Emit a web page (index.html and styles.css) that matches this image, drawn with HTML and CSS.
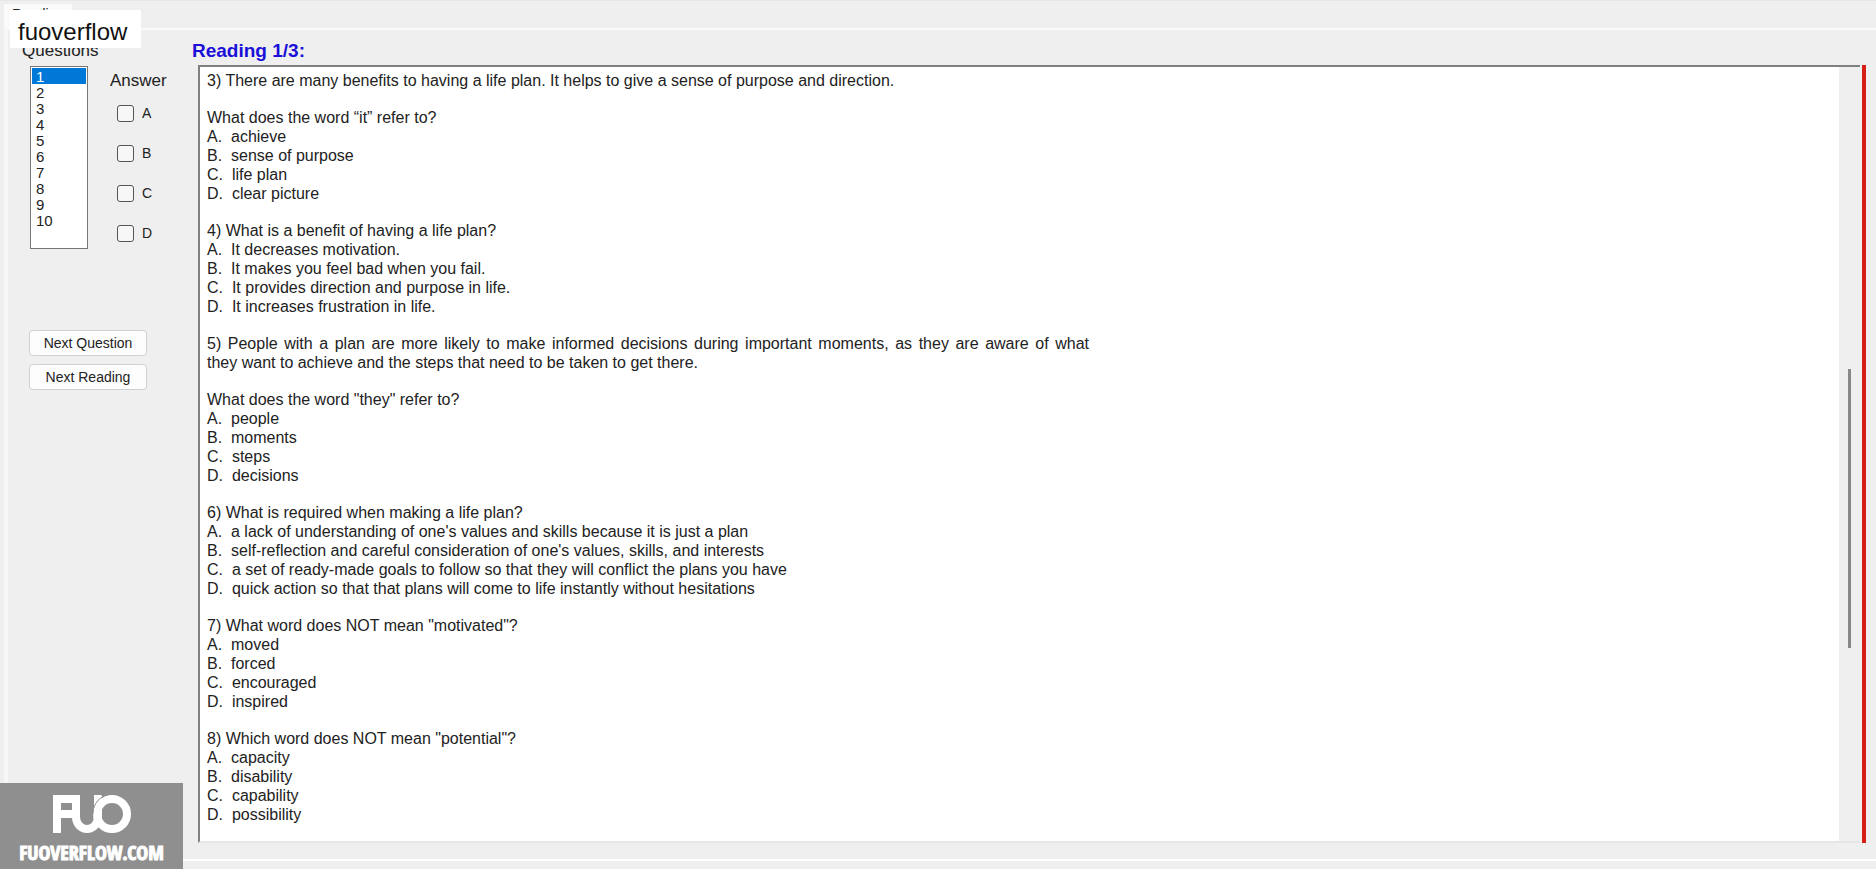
FILE: index.html
```html
<!DOCTYPE html>
<html lang="en">
<head>
<meta charset="utf-8">
<title>Reading</title>
<link rel="stylesheet" href="styles.css">
</head>
<body>
<header class="tabs"><button class="tab" type="button">Reading</button></header>
<main class="page">
  <aside class="sidebar">
    <label class="caption" for="questions">Questions</label>
    <div class="picker">
      <select class="questions" id="questions" size="11">
        <option selected>1</option><option>2</option><option>3</option><option>4</option><option>5</option><option>6</option><option>7</option><option>8</option><option>9</option><option>10</option>
      </select>
      <fieldset class="answers">
        <legend class="answers-title">Answer</legend>
        <label class="answer"><input type="checkbox">A</label>
        <label class="answer"><input type="checkbox">B</label>
        <label class="answer"><input type="checkbox">C</label>
        <label class="answer"><input type="checkbox">D</label>
      </fieldset>
    </div>
    <div class="actions">
      <button class="action" type="button">Next Question</button>
      <button class="action" type="button">Next Reading</button>
    </div>
  </aside>
  <section class="reading">
    <h1 class="title">Reading 1/3:</h1>
    <div class="frame">
      <div class="viewer">
        <article class="text">
          <p>3) There are many benefits to having a life plan. It helps to give a sense of purpose and direction.</p>
          <div class="block"><p>What does the word “it” refer to?</p><p>A.&nbsp; achieve</p><p>B.&nbsp; sense of purpose</p><p>C.&nbsp; life plan</p><p>D.&nbsp; clear picture</p></div>
          <div class="block"><p>4) What is a benefit of having a life plan?</p><p>A.&nbsp; It decreases motivation.</p><p>B.&nbsp; It makes you feel bad when you fail.</p><p>C.&nbsp; It provides direction and purpose in life.</p><p>D.&nbsp; It increases frustration in life.</p></div>
          <p class="passage"><span class="full-line">5) People with a plan are more likely to make informed decisions during important moments, as they are aware of what</span> they want to achieve and the steps that need to be taken to get there.</p>
          <div class="block"><p>What does the word "they" refer to?</p><p>A.&nbsp; people</p><p>B.&nbsp; moments</p><p>C.&nbsp; steps</p><p>D.&nbsp; decisions</p></div>
          <div class="block"><p>6) What is required when making a life plan?</p><p>A.&nbsp; a lack of understanding of one's values and skills because it is just a plan</p><p>B.&nbsp; self-reflection and careful consideration of one's values, skills, and interests</p><p>C.&nbsp; a set of ready-made goals to follow so that they will conflict the plans you have</p><p>D.&nbsp; quick action so that that plans will come to life instantly without hesitations</p></div>
          <div class="block"><p>7) What word does NOT mean "motivated"?</p><p>A.&nbsp; moved</p><p>B.&nbsp; forced</p><p>C.&nbsp; encouraged</p><p>D.&nbsp; inspired</p></div>
          <div class="block"><p>8) Which word does NOT mean "potential"?</p><p>A.&nbsp; capacity</p><p>B.&nbsp; disability</p><p>C.&nbsp; capability</p><p>D.&nbsp; possibility</p></div>
        </article>
        <div class="scroll"><div class="thumb"></div></div>
      </div>
      <div class="edge"></div>
    </div>
  </section>
</main>
<div class="badge">fuoverflow</div>
<div class="watermark">
  <svg class="logo" viewBox="0 0 78 38" width="78" height="38" aria-hidden="true">
    <g fill="none" stroke="#fff" stroke-width="8">
      <path d="M4 38V4H20M4 19H20"/>
      <path d="M23 0V22A11 12 0 0 0 45 22V0"/>
      <circle cx="59" cy="19" r="15"/>
    </g>
    <path d="M51 1A19 19 0 0 0 40 19" fill="none" stroke="#8f8f8f"/>
    <path d="M49 1L48 0H56L52 1Z" fill="#8f8f8f"/>
  </svg>
  <span class="site">FUOVERFLOW.COM</span>
</div>
</body>
</html>
```
FILE: styles.css
```css
* { box-sizing: border-box; }
body {
  margin: 0;
  height: 100vh;
  display: flex;
  flex-direction: column;
  overflow: hidden;
  background: #efefef;
  color: #222;
  font-family: "Liberation Sans", Arial, sans-serif;
  font-size: 16px;
}
p { margin: 0; }
.tabs { flex: none; height: 28px; padding: 3px 4px 0; border-top: 1px solid #e6e6e6; }
.tab { display: block; height: 24px; width: 68px; padding: 0 8px 4px; border: 0; background: #fafafa; font: 14px/16px "Liberation Sans", Arial, sans-serif; color: #222; text-align: left; }
.page {
  flex: 1;
  min-height: 0;
  display: flex;
  margin: 0 0 8px 4px;
  border-top: 2px solid #fafafa;
  border-left: 4px solid #f7f7f7;
  border-bottom: 2px solid #fff;
}
.sidebar { flex: none; width: 184px; padding: 11px 0 0 14px; }
.caption { display: block; line-height: 20px; font-size: 17px; }
.picker { display: flex; align-items: flex-start; gap: 22px; padding: 5px 0 0 8px; }
.questions {
  width: 58px;
  height: 183px;
  padding: 1px;
  border: 1px solid #777;
  border-radius: 0;
  background: #fff;
  color: #222;
  font: 15px/16px "Liberation Sans", Arial, sans-serif;
  overflow: hidden;
  outline: 0;
}
.questions option { height: 16px; min-height: 16px; padding: 0 4px; margin: 0; line-height: 16px; }
.questions option:checked { background: #0078d7 linear-gradient(#0078d7, #0078d7); color: #fff; }
.answers { margin: 0; padding: 0; border: 0; min-width: 0; }
.answers-title { padding: 5px 0 12px; line-height: 20px; font-size: 17px; }
.answer { display: flex; align-items: center; gap: 8px; height: 20px; margin: 0 0 20px 7px; font-size: 14px; }
.answer input {
  appearance: none;
  width: 17px;
  height: 17px;
  margin: 0;
  border: 1px solid #555;
  border-radius: 3px;
  background: #f7f7f7;
}
.actions { display: flex; flex-direction: column; gap: 8px; padding: 67px 0 0 7px; }
.action {
  width: 118px;
  height: 26px;
  padding: 0;
  border: 1px solid #d0d0d0;
  border-radius: 4px;
  background: #fdfdfd;
  color: #222;
  font: 14px "Liberation Sans", Arial, sans-serif;
}
.reading { flex: 1; min-width: 0; display: flex; flex-direction: column; padding: 10px 10px 16px 0; }
.title { margin: 0; line-height: 22px; padding-bottom: 3px; font-size: 19px; color: #1a10d8; }
.frame { flex: 1; min-height: 0; display: flex; gap: 2px; padding-left: 6px; }
.viewer {
  flex: 1;
  min-width: 0;
  display: flex;
  overflow: hidden;
  background: #fff;
  border-top: 2px solid #808080;
  border-left: 2px solid #808080;
  border-bottom: 2px solid #e6e6e6;
}
.text { flex: 1; padding: 4px 7px; line-height: 19px; font-size: 16px; }
.block, .passage { margin-top: 18px; }
.passage { max-width: 882px; }
.full-line { display: block; text-align: justify; text-align-last: justify; }
.scroll { flex: none; width: 21px; padding: 302px 9px 0; background: #efefef; }
.thumb { width: 3px; height: 279px; background: #888; }
.edge { width: 4px; background: #d81e12; }
.badge { position: absolute; left: 10px; top: 10px; padding: 8px 14px 2px 8px; background: #fff; color: #111; font-size: 24px; line-height: 28px; }
.watermark {
  position: absolute;
  left: 0;
  bottom: 0;
  width: 183px;
  height: 86px;
  padding-top: 12px;
  display: flex;
  flex-direction: column;
  align-items: center;
  gap: 10px;
  background: #8f8f8f;
  color: #fff;
}
.site { font: bold 20px/20px Impact, "Liberation Sans Narrow", "Open Sans Condensed", Roboto, sans-serif; -webkit-text-stroke: 1px #fff; }
```
